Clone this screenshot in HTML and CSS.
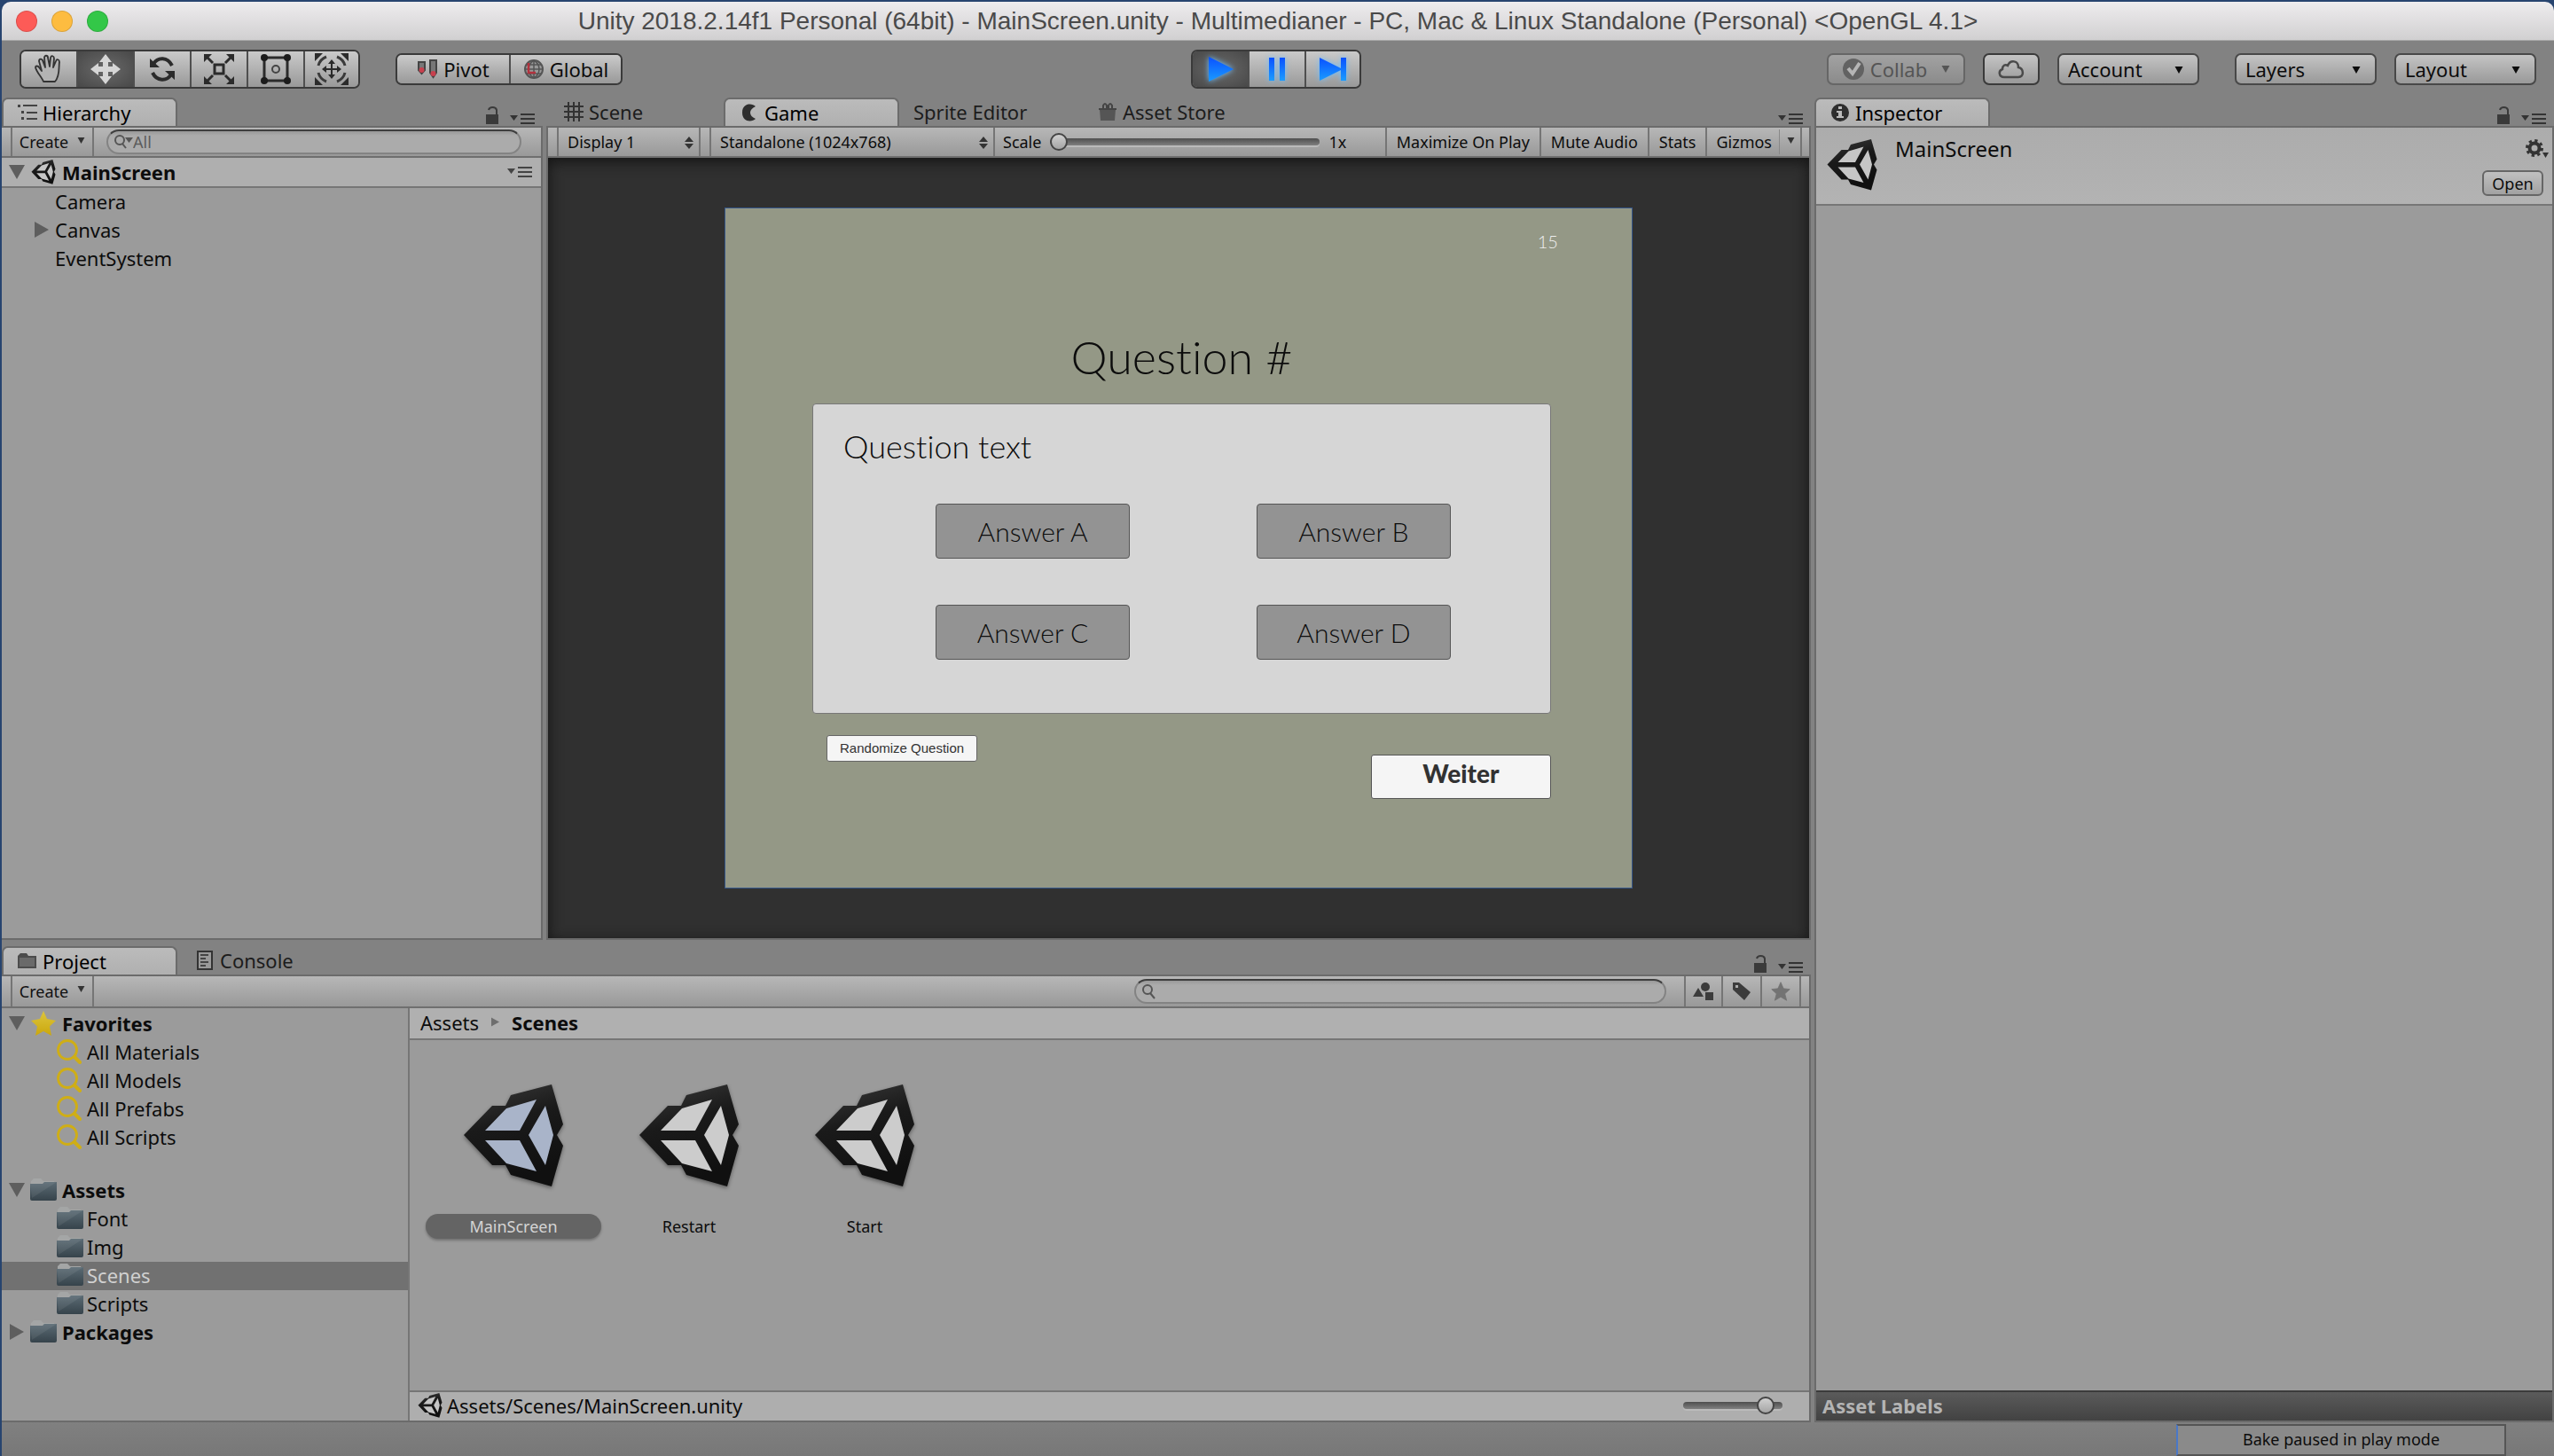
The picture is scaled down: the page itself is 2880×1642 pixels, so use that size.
FILE: index.html
```html
<!DOCTYPE html>
<html lang="en">
<head>
<meta charset="utf-8">
<title>Unity 2018.2.14f1 Personal (64bit) - MainScreen.unity</title>
<link rel="stylesheet" href="styles.css">
</head>
<body>
<svg class="sprite" aria-hidden="true">
  <defs>
    <linearGradient id="g-cube" x1="0" y1="0" x2="0.3" y2="1"><stop offset="0" stop-color="#3c3c3c"/><stop offset="0.45" stop-color="#1a1a1a"/><stop offset="1" stop-color="#101010"/></linearGradient>
    <linearGradient id="g-blue" x1="0" y1="0" x2="0" y2="1"><stop offset="0" stop-color="#0a50ff"/><stop offset="1" stop-color="#1a9cff"/></linearGradient>
    <linearGradient id="g-folder" x1="0" y1="0" x2="0" y2="1"><stop offset="0" stop-color="#5b6b74"/><stop offset="1" stop-color="#36434b"/></linearGradient>
    <linearGradient id="g-gold" x1="0" y1="0" x2="0" y2="1"><stop offset="0" stop-color="#dcc53e"/><stop offset="1" stop-color="#cba70c"/></linearGradient>
    <symbol id="unity" viewBox="0 0 112 116">
      <path fill="url(#g-cube)" d="M32 24H47L53 12L99 0L112 45L105 57L112 69L99 115L53 102L47 91H32L0 57Z"/>
      <path fill="currentColor" d="M24 52L48 27L82 17L63 52ZM24 63H63L82 98L48 89ZM92 24L101 57L92 91L73 57Z"/>
    </symbol>
    <symbol id="down" viewBox="0 0 18 16"><path fill="currentColor" d="M0 0H18L9 16Z"/></symbol>
    <symbol id="right" viewBox="0 0 16 18"><path fill="currentColor" d="M0 0L16 9L0 18Z"/></symbol>
    <symbol id="menu" viewBox="0 0 28 12"><path fill="currentColor" d="M0 2H9L4.500 8ZM12 0H28V2H12ZM12 5H28V7H12ZM12 10H28V12H12Z"/></symbol>
    <symbol id="lock" viewBox="0 0 14 20"><path fill="currentColor" d="M0 9H14V20H0Z"/><path fill="none" stroke="currentColor" stroke-width="2" d="M3 4C4 0 11 0 12 4V9"/></symbol>
    <symbol id="updown" viewBox="0 0 10 14"><path fill="currentColor" d="M0 6L5 0L10 6ZM0 8H10L5 14Z"/></symbol>
    <symbol id="lens" viewBox="0 0 28 28"><ellipse cx="12" cy="12" rx="10.500" ry="10.500" fill="none" stroke="currentColor" stroke-width="2.800"/><path stroke="currentColor" stroke-width="4" stroke-linecap="round" d="M20 20L26 26"/></symbol>
    <symbol id="folder" viewBox="0 0 30 26">
      <path fill="#a4a6a6" d="M1 6V3L4 0H12L15 3H27L28 6Z"/>
      <path fill="url(#g-folder)" d="M0 6H14L16 4H30V23Q30 25 28 25H2Q0 25 0 23Z"/>
      <path fill="#fff" opacity=".07" d="M0 6H14L16 4H30L2 22Z"/>
    </symbol>
    <symbol id="star" viewBox="0 0 28 28"><path fill="currentColor" stroke="currentColor" stroke-linejoin="round" d="M14 1L18 10L27 11L20 17.500L22.500 27L14 22L5.500 27L8 17.500L1 11L10 10Z"/></symbol>
  </defs>
</svg>

<div class="window">
  <header class="titlebar">
    <div class="lights"><button class="light red" aria-label="Close"></button><button class="light amber" aria-label="Minimize"></button><button class="light green" aria-label="Zoom"></button></div>
    <h1 class="title">Unity 2018.2.14f1 Personal (64bit) - MainScreen.unity - Multimedianer - PC, Mac &amp; Linux Standalone (Personal) &lt;OpenGL 4.1&gt;</h1>
  </header>

  <div class="toolbar">
    <div class="bar-side">
      <div class="segment tools">
        <button aria-label="Hand"><svg width="34" height="34" viewBox="0 0 34 34"><path fill="#b4b4b4" stroke="#333" stroke-width="1.800" stroke-linejoin="round" d="M11 31C9 26 3 20 2 15C2 13 5 13 6 15L9 19L6 8C6 5 9 5 10 7L13 15L12 4C12 1 16 1 16 4L18 14L19 4C20 1 23 2 23 5L22 15L25 8C26 5 29 6 29 9C28 14 30 24 24 31Z"/></svg></button>
        <button class="pressed" aria-label="Move"><svg width="36" height="36" viewBox="0 0 36 36"><path fill="#d6d6d6" d="M18 1L25 10H21V15H26V11L35 18L26 25V21H21V26H25L18 35L11 26H15V21H10V25L1 18L10 11V15H15V10H11Z"/></svg></button>
        <button aria-label="Rotate"><svg width="32" height="32" viewBox="0 0 32 32"><path fill="none" stroke="#2b2b2b" stroke-width="4" d="M6 10C11 2 22 2 27 12M26 22C21 30 10 30 5 20"/><path fill="#2b2b2b" d="M2 4V14H13ZM30 28V18H19Z"/></svg></button>
        <button aria-label="Scale"><svg width="34" height="34" viewBox="0 0 34 34"><path fill="none" stroke="#2b2b2b" stroke-width="3" d="M12 12H22V22H12ZM2 2L10 10M32 2L24 10M2 32L10 24M32 32L24 24"/><path fill="#2b2b2b" d="M0 0H9L0 9ZM34 0V9L25 0ZM0 34V25L9 34ZM34 34H25L34 25Z"/></svg></button>
        <button aria-label="Rect"><svg width="34" height="34" viewBox="0 0 34 34"><path fill="none" stroke="#2b2b2b" stroke-width="3" d="M4 4H30V30H4Z"/><circle cx="17" cy="17" r="4" fill="none" stroke="#444" stroke-width="2"/><g fill="#1c1c1c"><circle cx="4" cy="4" r="4"/><circle cx="30" cy="4" r="4"/><circle cx="4" cy="30" r="4"/><circle cx="30" cy="30" r="4"/></g></svg></button>
        <button aria-label="Transform"><svg width="38" height="36" viewBox="0 0 38 36"><path fill="none" stroke="#3a3a3a" stroke-width="3" d="M13 4C8 6 5 10 4 14M25 4C30 6 33 10 34 14M13 32C8 30 5 26 4 22M25 32C30 30 33 26 34 22"/><path fill="#2b2b2b" d="M0 0H9L0 9ZM38 0V9L29 0ZM0 36V27L9 36ZM38 36H29L38 27ZM19 7L23 12H20V17H25V14L30 18L25 22V19H20V24H23L19 29L15 24H18V19H13V22L8 18L13 14V17H18V12H15Z"/></svg></button>
      </div>
      <div class="segment modes">
        <button><svg width="24" height="22" viewBox="0 0 24 22"><path fill="#777" stroke="#444" stroke-width="2" d="M2 3H9V12L5.500 16L2 12ZM15 1H22V15L18.500 20L15 15Z"/><circle cx="5.500" cy="12" r="3" fill="#c8404e"/><circle cx="18.500" cy="16" r="3" fill="#c8404e"/></svg>Pivot</button>
        <button><svg width="24" height="24" viewBox="0 0 24 24"><circle cx="12" cy="12" r="10" fill="#999" stroke="#555" stroke-width="2"/><path fill="none" stroke="#555" stroke-width="1.500" d="M12 2V22M2 12H22M4 7H20M4 17H20M12 2C4 7 4 17 12 22M12 2C20 7 20 17 12 22"/><path fill="none" stroke="#b3323e" stroke-width="2.500" d="M6 5V16H14"/></svg>Global</button>
      </div>
    </div>
    <div class="segment tools play">
      <button class="pressed" aria-label="Play"><svg width="32" height="30" viewBox="0 0 32 30"><path fill="url(#g-blue)" d="M3 1L31 15L3 29Z"/></svg></button>
      <button aria-label="Pause"><svg width="20" height="28" viewBox="0 0 20 28"><path fill="url(#g-blue)" d="M1 1H7V27H1ZM13 1H19V27H13Z"/></svg></button>
      <button aria-label="Step"><svg width="32" height="28" viewBox="0 0 32 28"><path fill="url(#g-blue)" d="M1 1L25 13V1H31V27H25V15L1 27Z"/></svg></button>
    </div>
    <div class="bar-side bar-right">
      <button class="pill collab" disabled><svg width="26" height="26" viewBox="0 0 26 26"><circle cx="13" cy="13" r="12" fill="#626262"/><path fill="none" stroke="#b5b5b5" stroke-width="4" d="M7 12L12 18L20 6"/></svg>Collab<svg class="caret" width="10" height="8"><use href="#down"/></svg></button>
      <button class="pill cloud" aria-label="Services"><svg width="30" height="22" viewBox="0 0 30 22"><path fill="none" stroke="#4a4a4a" stroke-width="2.500" d="M7 20C1 20 0 13 5 11C5 7 8 5 11 7C14 0 23 1 23 9C29 10 30 20 23 20Z"/></svg></button>
      <span class="drop"><select aria-label="Account"><option>Account</option></select><svg width="10" height="8"><use href="#down"/></svg></span>
      <span class="drop drop-first"><select aria-label="Layers"><option>Layers</option></select><svg width="10" height="8"><use href="#down"/></svg></span>
      <span class="drop"><select aria-label="Layout"><option>Layout</option></select><svg width="10" height="8"><use href="#down"/></svg></span>
    </div>
  </div>

  <main class="docks">
    <div class="left">
      <div class="upper">
        <section class="panel flush">
          <div class="tabs">
            <button class="tab active"><svg width="22" height="18" viewBox="0 0 22 18"><path fill="#444" d="M0 0H3V3H0ZM6 0H22V2H6ZM4 7H7V10H4ZM10 8H22V10H10ZM4 14H7V17H4ZM10 15H22V17H10Z"/></svg>Hierarchy</button>
            <span class="corner"><svg width="14" height="20"><use href="#lock"/></svg><svg width="28" height="12"><use href="#menu"/></svg></span>
          </div>
          <div class="body">
            <div class="strip">
              <button class="cell create">Create<svg width="9" height="7"><use href="#down"/></svg></button>
              <label class="search filter"><svg width="22" height="18" viewBox="0 0 22 18"><circle cx="7" cy="7" r="5" fill="none" stroke="#555" stroke-width="2"/><path stroke="#555" stroke-width="2" d="M10 11L14 16"/><path fill="#555" d="M13 4H22L17.500 10Z"/></svg><input type="text" placeholder="All" aria-label="Search hierarchy"></label>
            </div>
            <div class="scene"><svg class="fold" width="18" height="16"><use href="#down"/></svg><svg class="cube" width="28" height="28"><use href="#unity"/></svg><b>MainScreen</b><svg class="end" width="28" height="12"><use href="#menu"/></svg></div>
            <ul class="tree">
              <li class="child">Camera</li>
              <li class="child"><svg class="fold" width="16" height="18"><use href="#right"/></svg>Canvas</li>
              <li class="child">EventSystem</li>
            </ul>
          </div>
        </section>

        <section class="panel">
          <div class="tabs">
            <button class="tab"><svg width="22" height="22" viewBox="0 0 22 22"><path stroke="#333" stroke-width="2" d="M5 0V22M11 0V22M17 0V22M0 5H22M0 11H22M0 17H22"/></svg>Scene</button>
            <button class="tab active"><svg width="22" height="20" viewBox="0 0 22 20"><path fill="#2e2e2e" d="M18 3C14 -1 3 -1 3 10C3 21 14 21 18 17C14 15 12 13 12 10C12 7 14 5 18 3Z"/></svg>Game</button>
            <button class="tab plain">Sprite Editor</button>
            <button class="tab"><svg width="22" height="22" viewBox="0 0 22 22"><path fill="#555" d="M2 8H20L19 21H3Z"/><path fill="none" stroke="#444" stroke-width="2" d="M1 8H21M6 8V4Q8 0 10 4V8M12 8V4Q14 0 16 4V8"/></svg>Asset Store</button>
            <span class="corner"><svg width="28" height="12"><use href="#menu"/></svg></span>
          </div>
          <div class="body">
            <div class="strip">
              <span class="cell pick display"><select aria-label="Display"><option>Display 1</option></select><svg width="10" height="14"><use href="#updown"/></svg></span>
              <span class="cell pick aspect"><select aria-label="Aspect"><option>Standalone (1024x768)</option></select><svg width="10" height="14"><use href="#updown"/></svg></span>
              <label class="scale">Scale<input type="range" min="1" max="5" value="1"><span>1x</span></label>
              <div class="cells">
                <button class="cell">Maximize On Play</button>
                <button class="cell">Mute Audio</button>
                <button class="cell">Stats</button>
                <button class="cell gizmos">Gizmos<i></i><svg width="9" height="7"><use href="#down"/></svg></button>
              </div>
            </div>
            <div class="view">
              <div class="game">
                <span class="timer">15</span>
                <h2>Question #</h2>
                <div class="quiz">
                  <p>Question text</p>
                  <div class="answers">
                    <button>Answer A</button><button>Answer B</button>
                    <button>Answer C</button><button>Answer D</button>
                  </div>
                </div>
                <div class="actions"><button class="random">Randomize Question</button><button class="next">Weiter</button></div>
              </div>
            </div>
          </div>
        </section>
      </div>

      <section class="panel flush project">
        <div class="tabs">
          <button class="tab active"><svg width="22" height="20" viewBox="0 0 22 20"><path fill="#4c4c4c" d="M0 4L3 1H10L12 4H21V18H0Z"/><path fill="#6a6a6a" d="M2 6H19V16H2Z"/></svg>Project</button>
          <button class="tab"><svg width="22" height="22" viewBox="-2 0 22 22"><path fill="#999" stroke="#333" stroke-width="2" d="M1 1H17V21H1Z"/><path stroke="#444" stroke-width="2" d="M4 5H13M4 9H10M4 13H13M4 17H10"/></svg>Console</button>
          <span class="corner"><svg width="14" height="20"><use href="#lock"/></svg><svg width="28" height="12"><use href="#menu"/></svg></span>
        </div>
        <div class="body">
          <div class="strip">
            <button class="cell create">Create<svg width="9" height="7"><use href="#down"/></svg></button>
            <label class="search assets"><svg width="16" height="18" viewBox="0 0 16 18"><circle cx="7" cy="7" r="5" fill="none" stroke="#555" stroke-width="2"/><path stroke="#555" stroke-width="2" d="M10 11L15 17"/></svg><input type="text" aria-label="Search assets"></label>
            <div class="cells icons">
              <button class="cell" aria-label="Search by type"><svg width="24" height="22" viewBox="0 0 24 22"><path fill="#3c3c3c" d="M6 7L12 17H0ZM14 12H23V21H14Z"/><circle cx="14" cy="6" r="5" fill="#3c3c3c"/></svg></button>
              <button class="cell" aria-label="Search by label"><svg width="24" height="22" viewBox="0 0 24 22"><path fill="#3c3c3c" fill-rule="evenodd" d="M2 1H9L22 12L15 21L2 9ZM5 4V7H8V4Z"/></svg></button>
              <button class="cell faded" aria-label="Save search"><svg width="22" height="22"><use href="#star"/></svg></button>
            </div>
          </div>
          <div class="browser">
            <ul class="tree folders">
              <li><svg class="fold" width="18" height="16"><use href="#down"/></svg><svg width="30" height="28" viewBox="-1 0 30 28"><path fill="url(#g-gold)" d="M14 0L18 9L28 11L21 17.500L23 28L14 23L5 28L7 17.500L0 11L10 9Z"/></svg><b>Favorites</b></li>
              <li class="child"><svg class="lens" width="28" height="28"><use href="#lens"/></svg>All Materials</li>
              <li class="child"><svg class="lens" width="28" height="28"><use href="#lens"/></svg>All Models</li>
              <li class="child"><svg class="lens" width="28" height="28"><use href="#lens"/></svg>All Prefabs</li>
              <li class="child"><svg class="lens" width="28" height="28"><use href="#lens"/></svg>All Scripts</li>
              <li class="root"><svg class="fold" width="18" height="16"><use href="#down"/></svg><svg width="30" height="26"><use href="#folder"/></svg><b>Assets</b></li>
              <li class="child"><svg width="30" height="26"><use href="#folder"/></svg>Font</li>
              <li class="child"><svg width="30" height="26"><use href="#folder"/></svg>Img</li>
              <li class="child selected"><svg width="30" height="26"><use href="#folder"/></svg>Scenes</li>
              <li class="child"><svg width="30" height="26"><use href="#folder"/></svg>Scripts</li>
              <li><svg class="fold" width="16" height="18"><use href="#right"/></svg><svg width="30" height="26"><use href="#folder"/></svg><b>Packages</b></li>
            </ul>
            <div class="contents">
              <nav class="crumbs"><a href="#assets">Assets</a><svg width="9" height="11"><use href="#right"/></svg><b>Scenes</b></nav>
              <ul class="grid">
                <li class="selected"><svg width="112" height="116"><use href="#unity"/></svg><span>MainScreen</span></li>
                <li><svg width="112" height="116"><use href="#unity"/></svg><span>Restart</span></li>
                <li><svg width="112" height="116"><use href="#unity"/></svg><span>Start</span></li>
              </ul>
              <footer class="path"><svg class="cube" width="28" height="28"><use href="#unity"/></svg>Assets/Scenes/MainScreen.unity<input type="range" min="0" max="100" value="90" aria-label="Icon size"></footer>
            </div>
          </div>
        </div>
      </section>
    </div>

    <section class="panel inspector">
      <div class="tabs">
        <button class="tab active"><svg width="22" height="20" viewBox="-1 0 22 20"><circle cx="10" cy="10" r="10" fill="#2e2e2e"/><path fill="#bbb" d="M8 3H12V6H8ZM6 8H12V14H14V16H6V14H8V10H6Z"/></svg>Inspector</button>
        <span class="corner"><svg width="14" height="20"><use href="#lock"/></svg><svg width="28" height="12"><use href="#menu"/></svg></span>
      </div>
      <div class="body">
        <div class="head">
          <svg class="cube" width="57" height="58"><use href="#unity"/></svg>
          <h2>MainScreen</h2>
          <div class="head-side"><svg width="26" height="24" viewBox="0 0 26 24"><circle cx="10" cy="10" r="5.500" fill="none" stroke="#333" stroke-width="4"/><circle cx="10" cy="10" r="8.500" fill="none" stroke="#333" stroke-width="3" stroke-dasharray="3.300 3.370"/><path fill="#333" d="M19 15H26L22.500 21Z"/></svg><button>Open</button></div>
        </div>
        <h3 class="labels">Asset Labels</h3>
      </div>
    </section>
  </main>

  <footer class="status"><div class="bake">Bake paused in play mode</div></footer>
</div>
</body>
</html>
```
FILE: styles.css
```css
* { box-sizing: border-box; }
body {
  margin: 0;
  background: #27446f;
  font: 22px/32px "Noto Sans", "Open Sans", sans-serif;
  color: #0c0c0c;
}
h1, h2, h3, p, ul { margin: 0; padding: 0; font-weight: 400; }
ul { list-style: none; }
svg { flex: none; display: block; }
button, select, input { font: inherit; color: inherit; margin: 0; padding: 0; border: 0; background: none; outline: 0; }
button { display: flex; align-items: center; justify-content: center; white-space: nowrap; }
select { appearance: none; width: 100%; height: 100%; }
b { font-weight: 700; }
.sprite { position: absolute; width: 0; height: 0; }

.window {
  min-height: 100vh;
  display: flex;
  flex-direction: column;
  padding: 2px 0 0 2px;
}
.titlebar {
  height: 44px;
  display: grid;
  grid-template-columns: 1fr auto 1fr;
  align-items: center;
  padding: 0 16px;
  border-radius: 10px 10px 0 0;
  border-bottom: 1px solid #a9a9a9;
  background: linear-gradient(#eeecee, #d1d0d1);
}
.lights { display: flex; gap: 16px; }
.light { width: 24px; height: 24px; border-radius: 50%; border: 1px solid #0002; }
.red { background: #fd5b57; }
.amber { background: #fdbc40; }
.green { background: #33c748; }
.title { font: 28px/40px "Liberation Sans", Arial, sans-serif; color: #4a4a4a; white-space: nowrap; }

.toolbar {
  height: 64px;
  display: grid;
  grid-template-columns: 1fr auto 1fr;
  align-items: center;
  padding: 0 20px;
  background: #828282;
}
.bar-side { display: flex; align-items: center; gap: 40px; }
.bar-right { justify-content: flex-end; gap: 20px; }
.segment { display: flex; border: 2px solid #3a3a3a; border-radius: 7px; overflow: hidden; }
.segment button { background: linear-gradient(#cacaca, #999); border-left: 2px solid #4f4f4f; }
.segment button:first-child { border-left: 0; }
.segment .pressed { background: radial-gradient(#6a6a6a, #484848); }
.tools button { width: 64px; height: 40px; }
.tools button:first-child, .tools button:last-child { width: 62px; }
.modes button { width: 126px; height: 32px; gap: 6px; }
.play { margin-right: 4px; }
.play svg { filter: drop-shadow(0 0 3px #6fc0ff); }
.pill, .drop {
  height: 36px;
  border: 2px solid #3a3a3a;
  border-radius: 7px;
  background: linear-gradient(#c4c4c4, #999);
}
.collab { width: 156px; gap: 6px; color: #555; border-color: #666; background: linear-gradient(#a2a2a2, #8b8b8b); }
.caret { margin-left: 10px; }
.cloud { width: 64px; }
.drop { position: relative; width: 160px; border-color: #484848; }
.drop select { padding-left: 10px; }
.drop svg { position: absolute; right: 16px; top: 13px; pointer-events: none; }
.drop-first { margin-left: 20px; }

.docks { flex: 1; display: grid; grid-template-columns: minmax(0, 2040fr) minmax(0, 834fr); gap: 4px; background: #828282; }
.left { display: grid; grid-template-rows: minmax(0, 949fr) minmax(0, 536fr); gap: 7px; }
.upper { display: grid; grid-template-columns: minmax(0, 610fr) minmax(0, 1426fr); gap: 4px; }
.panel { display: flex; flex-direction: column; min-width: 0; }
.tabs { display: flex; height: 32px; }
.tab { width: 200px; height: 32px; justify-content: flex-start; gap: 6px; padding-left: 20px; color: #1c1c1c; }
.tab.active { position: relative; width: 198px; color: #000; border: 2px solid #6b6b6b; border-bottom: 0; border-radius: 7px 7px 0 0; background: linear-gradient(#bbb, #b0b0b0); padding-left: 16px; }
.tab.plain { padding-left: 16px; width: 204px; }
.corner { margin-left: auto; display: flex; align-items: flex-end; gap: 13px; padding: 0 9px 2px 0; color: #3a3a3a; }
.corner svg:last-child { color: #333; }
.body { flex: 1; display: flex; flex-direction: column; min-height: 0; border: 2px solid #6b6b6b; background: #9b9b9b; }
.flush .body { border-left: 0; }

.strip {
  display: flex;
  height: 34px;
  padding-left: 10px;
  font-size: 18px;
  border-bottom: 2px solid #6f6f6f;
  background: linear-gradient(#b7b7b7, #999);
}
.cell { border: 0 solid #757575; border-width: 0 2px 0 0; padding: 0 11px; height: 32px; }
.create { gap: 10px; width: 94px; padding: 0 8px; border-left-width: 2px; color: #111; }
.create svg, .gizmos svg { color: #333; margin-bottom: 4px; }
.search {
  display: flex;
  align-items: center;
  height: 28px;
  margin: 2px 0;
  padding: 0 10px 0 6px;
  border: 2px solid #838383;
  border-top-color: #3e3e3e;
  border-radius: 14px;
  background: linear-gradient(#999, #ababab 5px);
}
.search input { flex: 1; min-width: 0; height: 24px; }
.search input::placeholder { color: #5c5c5c; opacity: 1; }
.filter { flex: 1; margin: 2px 22px 2px 14px; }
.pick { position: relative; border-left-width: 2px; padding: 0; }
.pick select { padding-left: 10px; }
.pick svg { position: absolute; right: 6px; top: 10px; color: #333; pointer-events: none; }
.display { width: 162px; margin-right: 10px; }
.aspect { width: 322px; }
.scale { display: flex; align-items: center; gap: 10px; padding-left: 9px; }
.scale input { width: 304px; }
.cells { display: flex; margin-left: auto; padding-right: 8px; }
.cells .cell:first-child { border-left-width: 2px; }
.gizmos { padding: 0 6px 0 10px; }
.gizmos i { width: 1px; height: 28px; margin: 0 8px; background: #888; }
.icons { margin-left: 20px; padding-right: 9px; }
.icons .cell { width: 44px; padding: 0; }
.faded { color: #737373; }

input[type="range"] { appearance: none; height: 20px; }
input[type="range"]::-webkit-slider-runnable-track { height: 8px; border-radius: 4px; background: linear-gradient(#4e4e4e, #808080); box-shadow: 0 2px #bbb; }
input[type="range"]::-webkit-slider-thumb { appearance: none; width: 20px; height: 20px; margin-top: -6px; border: 2px solid #444; border-radius: 50%; background: linear-gradient(#d0d0d0, #a5a5a5); }

.scene { display: flex; align-items: center; gap: 7px; height: 34px; padding: 0 10px 0 8px; border-bottom: 2px solid #767676; background: #afafaf; }
.end { margin-left: auto; color: #444; }
.fold { color: #5e5e5e; }
.cube { color: #c6c6c6; }
.tree li { display: flex; align-items: center; height: 32px; padding-bottom: 2px; }
.tree .child { padding-left: 60px; }
.tree .child .fold { margin: 0 7px 0 -23px; }

.view { flex: 1; display: flex; justify-content: center; align-items: flex-start; padding: 56px 0; background: #303030; box-shadow: inset 0 4px 16px #141414; }
.game {
  width: 72%;
  min-height: 768px;
  padding: 0 91px 0 98px;
  border: 1px solid #35568a;
  background: #949886;
  font: 34px/40px Lato, "Open Sans", sans-serif;
  font-weight: 300;
  font-variant-ligatures: none;
}
.timer { display: block; text-align: right; margin: 17px -8px 0 0; font-size: 20px; color: #eee; }
.game h2 { font-size: 52px; line-height: 64px; font-weight: 300; text-align: center; margin-top: 78px; }
.quiz { height: 350px; margin-top: 21px; padding: 27px 34px; border: 1px solid #777; border-radius: 4px; background: #d6d6d6; }
.quiz p { font-size: 36px; font-weight: 300; }
.answers { display: grid; grid-template-columns: 219px 219px; justify-content: space-between; gap: 52px 0; padding: 45px 78px 0 104px; }
.answers button { height: 62px; border: 1px solid #555; border-radius: 4px; background: #939393; font-size: 30px; font-weight: 300; }
.actions { display: flex; justify-content: space-between; align-items: flex-start; padding: 24px 0 0 16px; }
.random { width: 170px; height: 30px; border: 1px solid #666; border-radius: 3px; background: #f5f5f5; font: 15px/20px "Liberation Sans", Arial, sans-serif; color: #333; }
.next { width: 203px; height: 50px; margin-top: 22px; padding-bottom: 8px; border: 1px solid #555; border-radius: 3px; background: #f5f5f5; font-size: 28px; font-weight: 900; color: #323232; }

.project .strip { height: 36px; }
.project .cell { height: 34px; }
.project .search { margin-top: 3px; }
.assets { width: 600px; margin-left: auto; }
.browser { flex: 1; display: grid; grid-template-columns: 460px minmax(0, 1fr); }
.folders { padding-top: 2px; border-right: 2px solid #767676; }
.folders li { gap: 6px; padding-left: 8px; }
.folders .fold { width: 18px; }
.folders .child { gap: 4px; padding-left: 62px; }
.folders .root { margin-top: 28px; }
.folders .selected { background: #717171; color: #d0d0d0; }
.lens { color: #cfae16; margin-right: 2px; }
.contents { display: flex; flex-direction: column; }
.crumbs { display: flex; align-items: center; gap: 14px; height: 36px; padding: 0 12px 2px; border-bottom: 2px solid #767676; background: #b0b0b0; }
.crumbs a { color: inherit; text-decoration: none; }
.crumbs svg { color: #6e6e6e; }
.grid { flex: 1; display: flex; padding: 50px 18px; font-size: 18px; line-height: 28px; text-align: center; color: #ccc; }
.grid li { width: 198px; }
.grid svg { margin: 0 auto 30px; filter: drop-shadow(0 2px 2px #0006); }
.grid span { display: block; border-radius: 14px; color: #0c0c0c; }
.grid .selected { color: #a9b4c9; }
.grid .selected span { background: #646464; color: #d4d4d4; box-shadow: 0 2px 3px #0004; }
.path { display: flex; align-items: center; gap: 5px; height: 34px; padding: 0 30px 2px 9px; border-top: 2px solid #767676; background: #aeaeae; }
.path input { width: 112px; margin-left: auto; }

.head { display: flex; height: 88px; padding: 8px 4px 0 12px; border-bottom: 2px solid #767676; background: linear-gradient(#acacac, #b3b3b3); }
.head .cube { margin-top: 5px; }
.head h2 { flex: 1; padding-left: 20px; font-size: 24px; }
.head-side { display: flex; flex-direction: column; align-items: flex-end; gap: 11px; padding-top: 5px; }
.head-side button { width: 69px; height: 29px; margin-right: 6px; border: 2px solid #666; border-radius: 6px; background: linear-gradient(#c0c0c0, #a2a2a2); font-size: 18px; }
.labels { margin-top: auto; height: 34px; padding-left: 7px; border-top: 2px solid #3c3c3c; background: linear-gradient(#5b5b5b, #424242); font-size: 22px; line-height: 30px; font-weight: 700; color: #b4b4b4; }

.status { height: 40px; display: flex; justify-content: flex-end; padding: 2px 54px 2px 0; background: linear-gradient(#808080, #777); }
.bake { width: 372px; border: 2px solid #555; border-left-color: #4a78c8; background: #8a8a8a; font-size: 18px; line-height: 30px; text-align: center; }
```
